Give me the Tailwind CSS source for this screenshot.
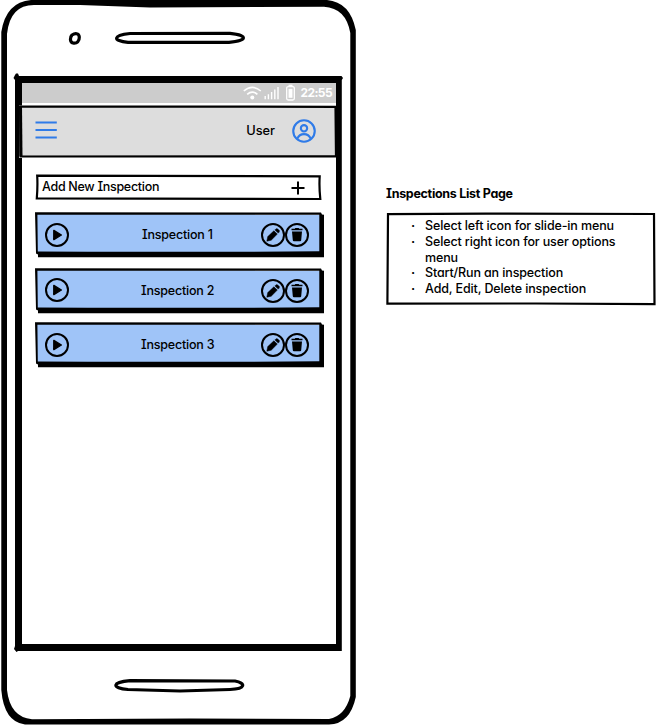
<!DOCTYPE html>
<html lang="en">
<head>
<meta charset="utf-8">
<title>Inspections List Page</title>
<script src="https://cdn.jsdelivr.net/npm/@tailwindcss/browser@4"></script>
</head>
<body class="bg-white">
<svg class="hidden">
  <symbol id="card" viewBox="0 0 290 46">
    <path d="M3 6L289 6L289 45.3L3 45.3Z" fill="#000"/>
    <path d="M1.5 2L285 2.5L285 41L2 41.5Z" fill="#9fc4f8"/>
    <path d="M0 .3L286 .6L287 2.4L289 2.8V45H3V42.5L1 41.5L.5 20ZM2.4 2.8L2.8 39.5Q80 39.9 140 39.7Q220 39.9 284.3 39.3V2.8Z" fill="#000" fill-rule="evenodd"/>
  </symbol>
  <symbol id="play" viewBox="0 0 24 24">
    <circle cx="12" cy="12" r="11" fill="none" stroke="#000" stroke-width="2"/>
    <path d="M8.8 7.4L16.4 12L8.8 16.6Z" stroke="#000" stroke-width="1.4" stroke-linejoin="round"/>
  </symbol>
  <symbol id="pencil" viewBox="0 0 24 24">
    <circle cx="12" cy="12" r="11" fill="none" stroke="#000" stroke-width="2"/>
    <path d="M5.8 18.2L6.8 13.6L12.9 7.8L16.3 11.1L10.2 17.2Z" stroke="#000" stroke-width=".5"/>
    <path d="M13.9 6.9L14.9 5.9Q15.9 5.3 16.8 6L18.1 7.3Q18.8 8.3 18.1 9.2L17.2 10.1Z" stroke="#000" stroke-width=".4"/>
  </symbol>
  <symbol id="trash" viewBox="0 0 24 24">
    <circle cx="12" cy="12" r="11" fill="none" stroke="#000" stroke-width="2"/>
    <path d="M6.5 5.8H9.8L10.3 5H13.7L14.2 5.8H17.5V7.3H6.5ZM7 8.5H17L16.2 17.2Q16 18.2 15.1 18.2H8.9Q8 18.2 7.8 17.2Z"/>
  </symbol>
</svg>
<main class="flex w-[656px] h-[725px] overflow-hidden bg-white text-black text-[12.5px] font-medium font-[Inter,sans-serif] [font-feature-settings:'cv08','cv11']">
  <section class="relative w-[356px] h-[725px] shrink-0 pt-[83px] pl-[22px]">
    <svg class="absolute inset-0" width="356" height="725" viewBox="0 0 356 725">
      <path fill-rule="evenodd" d="M31 0H327Q350 2 355.8 30V697Q350 724 329 724.5H25Q4 722 1.3 690V32Q6 2 31 0ZM34 5Q10 5 7 34V690Q10 717 32 719.3L190 718.5L329 719Q345 716 350.3 696V33Q346 8 324 6.7L150 7.4L80 5Z"/>
      <path fill-rule="evenodd" d="M15 75L16 73.5L18 73.5L19 76H341.5L343 78L341.8 80V651H18L16.5 652L14 649L15 646V80L13.5 78ZM22 83V644H336V83Z"/>
      <g fill="none" stroke="#000" stroke-width="3.2">
        <path d="M72 35C75 33 79 33 79.3 37C79.5 41 77 43.8 73 43C69.5 42 70 37 72 35Z"/>
        <path d="M130 33.5L230 33.3C248 35 248 41 229 42.3L128 42.3C112 41 113 35 130 33.5Z"/>
        <path d="M130 680.7L235 681C246 683 246 689 230 689.5L180 691L128 689.5C111 688 112 682 130 680.7Z"/>
      </g>
    </svg>
    <div class="relative w-[314px]">
      <div class="flex h-[20px] items-center justify-end bg-[#cccccc] pr-[4px] text-white">
        <svg width="52" height="20" viewBox="0 0 52 20" fill="none" stroke="#fff" class="mr-[5.5px]">
          <path d="M.8 8Q9.3 .8 17.8 8M4.2 11.4Q9.3 7 14.4 11.4" stroke-width="1.6"/>
          <circle cx="9.3" cy="14.4" r="2" fill="#fff" stroke="none"/>
          <path d="M22.2 13V16.3M25.4 11.3V16.3M28.6 9V16.3M31.8 6.5V16.3M35 4V16.3" stroke-width="1.4"/>
          <rect x="43.7" y="3.6" width="7.6" height="13.4" rx="1.5" stroke-width="1.3"/>
          <path d="M45.5 2.5H49.5" stroke-width="1.6"/>
          <path d="M47.5 5.8V14.8" stroke-width="4"/>
        </svg>
        <span class="text-[12px] font-bold leading-[20px] tracking-[-0.6px] whitespace-nowrap">22:55</span>
      </div>
      <header class="relative -ml-[3px] flex h-[55px] w-[318px] items-center">
        <svg class="absolute inset-0" width="318" height="55" viewBox="0 0 318 55">
          <path d="M3 0H317V55H0V2.5H3Z" fill="#fff"/>
          <path d="M1.3 3.5L316.5 3.8L317 53.3L1.5 53.5Z" fill="#ddd" stroke="#000" stroke-width="2.2"/>
          <path d="M1.5 3L2 53" stroke="#000" stroke-width="3"/>
        </svg>
        <svg class="relative ml-[16px]" width="22" height="20" viewBox="0 0 22 20" stroke="#2f7be8" stroke-width="2"><path d="M.5 1.5H21.8M.5 9H21.8M.5 16.5H21.8"/></svg>
        <span class="relative ml-auto mr-[17px] mt-[1px] leading-[16px] text-[12.8px]">User</span>
        <svg class="relative mr-[21px] mt-[1px]" width="24" height="24" viewBox="0 0 25 25" fill="none" stroke="#2f7be8" stroke-width="2.2"><circle cx="12.5" cy="12.5" r="11.2"/><circle cx="12.5" cy="9.7" r="3.3"/><path d="M5.5 20.5Q7.5 15.8 12.5 15.8T19.5 20.5"/></svg>
      </header>
      <div class="ml-[13px] flex flex-col">
        <div class="relative mt-[16px] flex h-[26px] w-[288px] items-center">
          <svg class="absolute inset-0" width="288" height="26" viewBox="0 0 288 26" fill="none" stroke="#000" stroke-width="2.2"><path d="M2.2 1.7L284.7 2.3Q284 13 285.3 25L1.8 24.4Q2.8 12 2.2 1.7Z"/></svg>
          <span class="relative ml-[7px] leading-[16px] tracking-[-0.3px]">Add New Inspection</span>
          <svg class="relative ml-auto mr-[18px] mt-[2px]" width="14" height="14" viewBox="0 0 14 14" stroke="#000" stroke-width="2"><path d="M7 .5V13.5M.5 7H13.5"/></svg>
        </div>
        <div class="relative mt-[12px] flex h-[46px] w-[290px] items-center">
          <svg class="absolute inset-0" width="290" height="46"><use href="#card"/></svg>
          <svg class="relative ml-[10px]" width="24" height="24"><use href="#play"/></svg>
          <span class="relative ml-[73px] leading-[16px] tracking-[-0.2px]">Inspection 1</span>
          <div class="relative ml-auto mr-[16px] flex"><svg width="24" height="24"><use href="#pencil"/></svg><svg width="24" height="24"><use href="#trash"/></svg></div>
        </div>
        <div class="relative mt-[10px] flex h-[46px] w-[290px] items-center">
          <svg class="absolute inset-0" width="290" height="46"><use href="#card"/></svg>
          <svg class="relative ml-[10px] mb-[2px]" width="24" height="24"><use href="#play"/></svg>
          <span class="relative ml-[72px] leading-[16px] tracking-[-0.2px]">Inspection 2</span>
          <div class="relative ml-auto mr-[16px] flex"><svg width="24" height="24"><use href="#pencil"/></svg><svg width="24" height="24"><use href="#trash"/></svg></div>
        </div>
        <div class="relative mt-[8px] flex h-[46px] w-[290px] items-center">
          <svg class="absolute inset-0" width="290" height="46"><use href="#card"/></svg>
          <svg class="relative ml-[10px]" width="24" height="24"><use href="#play"/></svg>
          <span class="relative ml-[72px] leading-[16px] tracking-[-0.2px]">Inspection 3</span>
          <div class="relative ml-auto mr-[16px] flex"><svg width="24" height="24"><use href="#pencil"/></svg><svg width="24" height="24"><use href="#trash"/></svg></div>
        </div>
      </div>
    </div>
  </section>
  <aside class="pt-[186px] pl-[30px]">
    <h1 class="text-[12.5px] font-bold leading-[16px] tracking-[-0.3px] whitespace-nowrap">Inspections List Page</h1>
    <div class="relative mt-[10px] h-[94px] w-[270px] pt-[6px]">
      <svg class="absolute inset-0" width="270" height="94" viewBox="0 0 270 94" fill="none" stroke="#000" stroke-width="2.2"><path d="M2 2.2L100 1.6L268 2L268.5 92.2L150 91.5L1.4 91.6Z"/></svg>
      <ul class="relative leading-[15.8px] tracking-[-0.13px] whitespace-nowrap">
        <li class="flex"><span class="w-[39px] pl-[25px] font-bold">·</span><span>Select left icon for slide-in menu</span></li>
        <li class="flex"><span class="w-[39px] pl-[25px] font-bold">·</span><span>Select right icon for user options<br>menu</span></li>
        <li class="flex"><span class="w-[39px] pl-[25px] font-bold">·</span><span>Start/Run an inspection</span></li>
        <li class="flex"><span class="w-[39px] pl-[25px] font-bold">·</span><span>Add, Edit, Delete inspection</span></li>
      </ul>
    </div>
  </aside>
</main>
</body>
</html>
